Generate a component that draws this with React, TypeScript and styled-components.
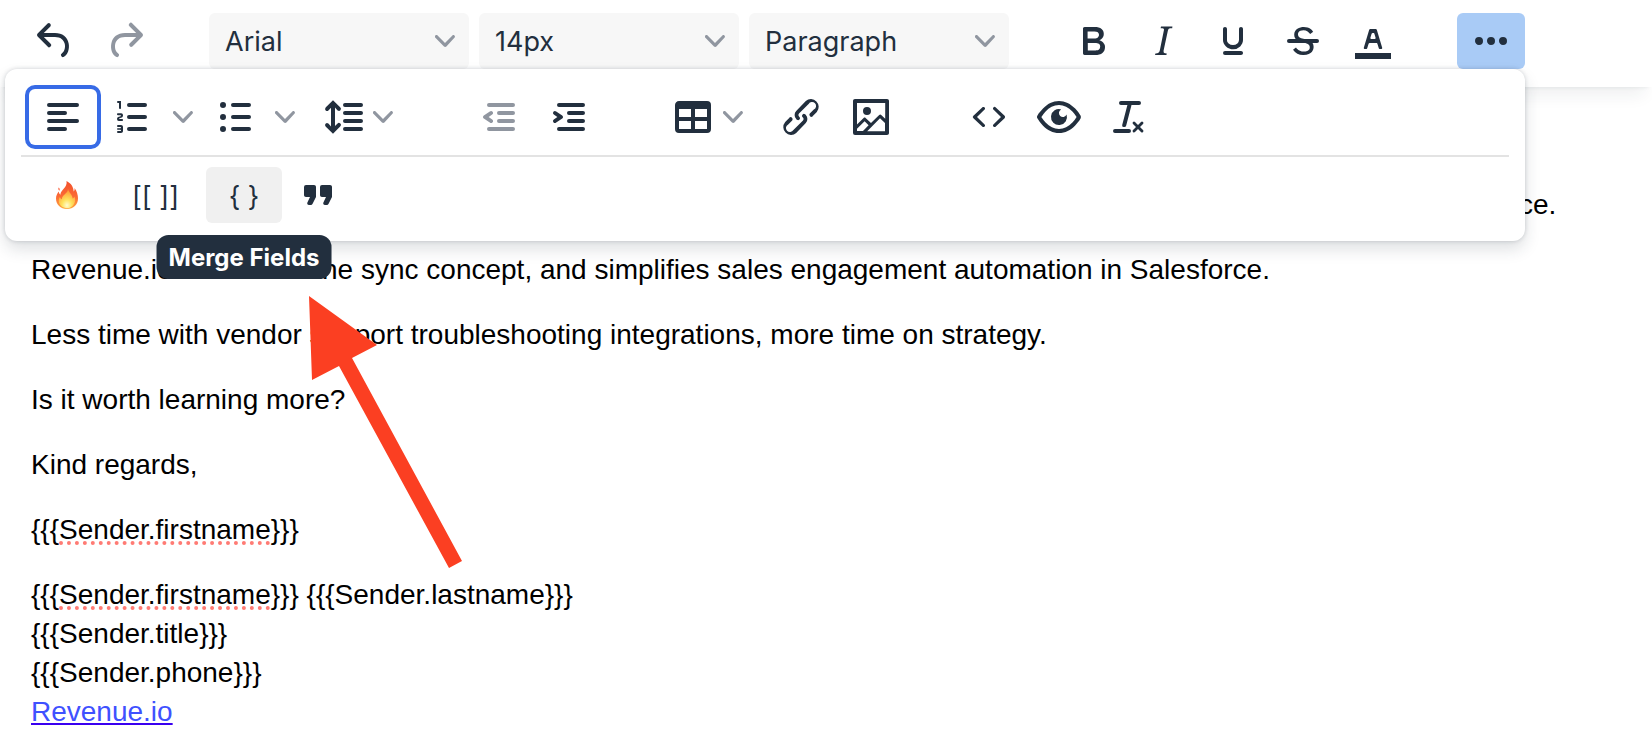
import React from "react";
import styled, { createGlobalStyle, css } from "styled-components";

const INK = "#222f3e";
const MUTED = "#9096a0";
const UI_FONT = `Inter, "Liberation Sans", sans-serif`;

const GlobalStyle = createGlobalStyle`
  *, *::before, *::after { box-sizing: border-box; }
  body { margin: 0; background: #fff; overflow-x: hidden; }
`;

const Editor = styled.div`
  position: relative;
  min-height: 100vh;
  background: #fff;
`;

const Header = styled.header`
  position: relative;
  z-index: 1;
  padding: 13px 21px 18px;
  background: #fff;
  box-shadow: 0 4px 4px -4px rgba(34, 47, 62, 0.1), 0 16px 16px -8px rgba(34, 47, 62, 0.07);
`;

const Toolbar = styled.div`
  position: relative;
  display: flex;
  width: fit-content;
  gap: 50px;
`;

const Group = styled.div<{ $gap?: number }>`
  display: flex;
  gap: ${(p) => p.$gap ?? 2}px;
`;

const ToolButton = styled.button<{ $active?: boolean; $focused?: boolean }>`
  display: flex;
  align-items: center;
  justify-content: center;
  width: 68px;
  height: 56px;
  padding: 0;
  border: 0;
  border-radius: 6px;
  background: ${(p) => (p.$active ? "#a9cbf6" : "transparent")};
  color: ${INK};
  cursor: pointer;

  &:disabled {
    color: ${MUTED};
    cursor: default;
  }

  ${(p) =>
    p.$focused &&
    css`
      box-shadow: 0 0 0 4px #376be6;
    `}
`;

const EmojiButton = styled(ToolButton)`
  width: 76px;
`;

const TextButton = styled(ToolButton)<{ $hovered?: boolean; $wide?: boolean }>`
  width: ${(p) => (p.$wide ? 97 : 76)}px;
  padding-top: 3px;
  background: ${(p) => (p.$hovered ? "#f0f0f0" : "transparent")};
  font-family: ${UI_FONT};
  font-size: 27px;
  line-height: 32px;
  white-space: nowrap;
`;

const MenuButton = styled(ToolButton)`
  justify-content: flex-start;
  width: 112px;
  padding-left: 16px;
  gap: 6px;
`;

const Split = styled.div`
  display: flex;
`;

const SplitChevron = styled(ToolButton)`
  width: 32px;
`;

const Field = styled.label`
  display: grid;
  grid-template-columns: 1fr 34px;
  align-items: center;
  width: 260px;
  height: 56px;
  border-radius: 6px;
  background: #f7f7f7;
`;

const Select = styled.select`
  grid-area: 1 / 1 / 2 / 3;
  height: 56px;
  padding: 0 40px 0 16px;
  border: 0;
  border-radius: 6px;
  appearance: none;
  background: transparent;
  color: ${INK};
  font-family: ${UI_FONT};
  font-size: 27px;
`;

const FieldChevron = styled.span`
  grid-area: 1 / 2 / 2 / 3;
  display: flex;
  pointer-events: none;
`;

const Drawer = styled.div`
  position: absolute;
  top: 56px;
  left: -16px;
  right: 0;
  padding: 10px 16px 8px;
  border-radius: 12px;
  background: #fff;
  box-shadow: 0 0 4px rgba(34, 47, 62, 0.2), 0 8px 16px rgba(34, 47, 62, 0.15);
`;

const DrawerRow = styled.div`
  display: flex;
  gap: 50px;
  padding: 10px 8px;

  & + & {
    border-top: 2px solid #e3e3e3;
  }
`;

const TooltipAnchor = styled.div`
  position: relative;
  display: flex;
`;

const Tooltip = styled.div`
  position: absolute;
  top: 68px;
  left: 50%;
  transform: translateX(-50%);
  padding: 7px 12px 5px;
  border-radius: 12px;
  background: ${INK};
  color: #fff;
  font-family: ${UI_FONT};
  font-size: 24px;
  font-weight: 700;
  line-height: 32px;
  white-space: nowrap;
`;

const Content = styled.main`
  padding: 98px 31px 12px;
  color: #000;
  font-family: Arial, "Liberation Sans", sans-serif;
  font-size: 28px;
  line-height: 39px;
`;

const Paragraph = styled.p`
  margin: 0 0 26px;
`;

const Misspelled = styled.span`
  text-decoration: underline dotted #ff7b74 4px;
  text-decoration-skip-ink: none;
  text-underline-offset: 2px;
`;

const Link = styled.a`
  color: #3f51ff;
  text-decoration: underline #3a00f0 2px;
  text-underline-offset: 2px;
`;

const Arrow = styled.svg`
  position: absolute;
  z-index: 2;
  top: 296px;
  left: 309px;
  pointer-events: none;
`;

const paths = {
  undo: "M6.4 8H12c3.7 0 6.2 2 6.8 5.1.6 2.7-.4 5.6-2.3 6.8a1 1 0 0 1-1-1.8c1.1-.6 1.8-2.7 1.4-4.6-.5-2.1-2.1-3.5-4.9-3.5H6.4l3.3 3.3a1 1 0 1 1-1.4 1.4l-5-5a1 1 0 0 1 0-1.4l5-5a1 1 0 0 1 1.4 1.4L6.4 8Z",
  redo: "M17.6 10H12c-2.8 0-4.4 1.4-4.9 3.5-.4 2 .3 4 1.4 4.6a1 1 0 1 1-1 1.8c-2-1.2-2.9-4.1-2.3-6.8.6-3 3-5.1 6.8-5.1h5.6l-3.3-3.3a1 1 0 1 1 1.4-1.4l5 5a1 1 0 0 1 0 1.4l-5 5a1 1 0 0 1-1.4-1.4l3.3-3.3Z",
  bold: "M7.8 19c-.3 0-.5 0-.6-.2l-.2-.5V5.7c0-.2 0-.4.2-.5l.6-.2h5c1.5 0 2.7.3 3.5 1 .7.6 1.1 1.4 1.1 2.5a3 3 0 0 1-.6 1.9c-.4.6-1 1-1.6 1.2.4.1.9.3 1.3.6s.8.7 1 1.2c.4.4.5 1 .5 1.6 0 1.3-.4 2.3-1.3 3-.8.7-2.1 1-3.8 1H7.8Zm5-8.3c.6 0 1.2-.1 1.6-.5.4-.3.6-.7.6-1.3 0-1.1-.8-1.7-2.3-1.7H9.3v3.5h3.4Zm.5 6c.7 0 1.3-.1 1.7-.4.4-.4.6-.9.6-1.5s-.2-1-.7-1.4c-.4-.3-1-.4-2-.4H9.4v3.8h4Z",
  italic:
    "m16.7 4.7-.1.9h-.3c-.6 0-1 0-1.4.3-.3.3-.4.6-.5 1.1l-2.1 9.8v.6c0 .5.4.8 1.4.8h.2l-.2.8H8l.2-.8h.2c1.1 0 1.8-.5 2-1.5l2-9.8.1-.5c0-.6-.4-.8-1.4-.8h-.3l.2-.9h5.8Z",
  underline:
    "M16 5c.6 0 1 .4 1 1v5.5a4 4 0 0 1-.4 1.8l-1 1.4a5.3 5.3 0 0 1-5.5 1 5 5 0 0 1-1.6-1c-.5-.4-.8-.9-1.1-1.4a4 4 0 0 1-.4-1.8V6c0-.6.4-1 1-1s1 .4 1 1v5.5c0 .3 0 .6.2 1l.6.7a3.3 3.3 0 0 0 2.2.8 3.4 3.4 0 0 0 2.2-.8c.3-.2.4-.5.6-.8l.2-.9V6c0-.6.4-1 1-1ZM8 17h8c.6 0 1 .4 1 1s-.4 1-1 1H8a1 1 0 0 1 0-2Z",
  strikeS:
    "M15.6 8.5c-.5-.7-1-1.1-1.3-1.3-.6-.4-1.3-.6-2-.6-2.7 0-2.8 1.7-2.8 2.1 0 1.6 1.8 2 3.2 2.3 4.4.9 4.6 2.8 4.6 3.9 0 1.4-.7 4.1-5 4.1A6.2 6.2 0 0 1 7 16.4l1.5-1.1c.4.6 1.6 2 3.7 2 1.6 0 2.5-.4 3-1.2.4-.8.3-2-.8-2.6-.7-.4-1.6-.7-2.9-1-1-.2-3.9-.8-3.9-3.6C7.6 6 10.3 5 12.4 5c2.9 0 4.2 1.6 4.7 2.4l-1.5 1.1Z",
  strikeBar: "M5 11h14a1 1 0 0 1 0 2H5a1 1 0 0 1 0-2Z",
  textColor:
    "M3 18h18v3H3zM8.7 16h-.8a.5.5 0 0 1-.5-.6l2.7-9c.1-.3.3-.4.5-.4h2.8c.2 0 .4.1.5.4l2.7 9a.5.5 0 0 1-.5.6h-.8a.5.5 0 0 1-.4-.4l-.7-2.2c0-.3-.3-.4-.5-.4h-3.4c-.2 0-.4.1-.5.4l-.7 2.2c0 .3-.2.4-.4.4Zm2.6-7.6-.6 2a.5.5 0 0 0 .5.6h1.6a.5.5 0 0 0 .5-.6l-.6-2c0-.3-.3-.4-.5-.4h-.4c-.2 0-.4.1-.5.4Z",
  more: "M6 10a2 2 0 0 0-2 2c0 1.1.9 2 2 2a2 2 0 0 0 2-2 2 2 0 0 0-2-2Zm12 0a2 2 0 0 0-2 2c0 1.1.9 2 2 2a2 2 0 0 0 2-2 2 2 0 0 0-2-2Zm-6 0a2 2 0 0 0-2 2c0 1.1.9 2 2 2a2 2 0 0 0 2-2 2 2 0 0 0-2-2Z",
  alignLeft:
    "M5 5h14a1 1 0 0 1 0 2H5a1 1 0 1 1 0-2Zm0 4h8a1 1 0 0 1 0 2H5a1 1 0 1 1 0-2Zm0 8h8a1 1 0 0 1 0 2H5a1 1 0 0 1 0-2Zm0-4h14a1 1 0 0 1 0 2H5a1 1 0 0 1 0-2Z",
  orderedList:
    "M10 17h8a1 1 0 0 1 0 2h-8a1 1 0 0 1 0-2Zm0-6h8a1 1 0 0 1 0 2h-8a1 1 0 0 1 0-2Zm0-6h8a1 1 0 0 1 0 2h-8a1 1 0 1 1 0-2ZM6 4v3.5c0 .3-.2.5-.5.5a.5.5 0 0 1-.5-.5V5h-.5a.5.5 0 0 1 0-1H6Zm-1 8.8.2.2h1.3c.3 0 .5.2.5.5s-.2.5-.5.5H4.9a1 1 0 0 1-.9-1V13c0-.4.3-.8.6-1l1.2-.4.2-.3a.2.2 0 0 0-.2-.2H4.5a.5.5 0 0 1-.5-.5c0-.3.2-.5.5-.5h1.6c.5 0 .9.4.9 1v.1c0 .4-.3.8-.6 1l-1.2.4-.2.3ZM7 17v2c0 .6-.4 1-1 1H4.5a.5.5 0 0 1 0-1h1.2c.2 0 .3-.1.3-.3 0-.2-.1-.3-.3-.3H4.4a.4.4 0 1 1 0-.8h1.3c.2 0 .3-.1.3-.3 0-.2-.1-.3-.3-.3H4.5a.5.5 0 1 1 0-1H6c.6 0 1 .4 1 1Z",
  bulletList:
    "M11 5h8a1 1 0 0 1 0 2h-8a1 1 0 0 1 0-2Zm0 6h8a1 1 0 0 1 0 2h-8a1 1 0 0 1 0-2Zm0 6h8a1 1 0 0 1 0 2h-8a1 1 0 0 1 0-2ZM4.5 6a1.5 1.5 0 1 1 3 0 1.5 1.5 0 0 1-3 0Zm0 6a1.5 1.5 0 1 1 3 0 1.5 1.5 0 0 1-3 0Zm0 6a1.5 1.5 0 1 1 3 0 1.5 1.5 0 0 1-3 0Z",
  lineHeight:
    "M21 5a1 1 0 0 1 0 2h-8a1 1 0 0 1 0-2h8Zm0 4a1 1 0 0 1 0 2h-8a1 1 0 0 1 0-2h8Zm0 4a1 1 0 0 1 0 2h-8a1 1 0 0 1 0-2h8Zm0 4a1 1 0 0 1 0 2h-8a1 1 0 0 1 0-2h8ZM7 3.6l3.7 3.7a1 1 0 0 1-1.3 1.5h-.1L8 7.3v9.2l1.3-1.3a1 1 0 0 1 1.3 0h.1c.4.4.4 1 0 1.3v.1L7 20.4l-3.7-3.7a1 1 0 0 1 1.3-1.5h.1L6 16.7V7.4L4.7 8.7a1 1 0 0 1-1.3 0h-.1a1 1 0 0 1 0-1.3v-.1L7 3.6Z",
  outdent:
    "M7 5h12a1 1 0 0 1 0 2H7a1 1 0 1 1 0-2Zm5 4h7a1 1 0 0 1 0 2h-7a1 1 0 0 1 0-2Zm0 4h7a1 1 0 0 1 0 2h-7a1 1 0 0 1 0-2Zm-5 4h12a1 1 0 0 1 0 2H7a1 1 0 0 1 0-2Zm1.6-3.8a1 1 0 0 1-1.2 1.6l-3-2a1 1 0 0 1 0-1.6l3-2a1 1 0 0 1 1.2 1.6L6.8 12l1.8 1.2Z",
  indent:
    "M7 5h12a1 1 0 0 1 0 2H7a1 1 0 1 1 0-2Zm5 4h7a1 1 0 0 1 0 2h-7a1 1 0 0 1 0-2Zm0 4h7a1 1 0 0 1 0 2h-7a1 1 0 0 1 0-2Zm-5 4h12a1 1 0 0 1 0 2H7a1 1 0 0 1 0-2Zm-2.6-3.8L6.2 12l-1.8-1.2a1 1 0 0 1 1.2-1.6l3 2a1 1 0 0 1 0 1.6l-3 2a1 1 0 1 1-1.2-1.6Z",
  table:
    "M19 4a2 2 0 0 1 2 2v12a2 2 0 0 1-2 2H5a2 2 0 0 1-2-2V6c0-1.1.9-2 2-2h14ZM5 14v4h6v-4H5Zm14 0h-6v4h6v-4Zm0-6h-6v4h6V8ZM5 12h6V8H5v4Z",
  link: "M6.2 12.3a1 1 0 0 1 1.4 1.4l-2 2a2 2 0 1 0 2.6 2.8l4.8-4.8a1 1 0 0 0 0-1.4 1 1 0 1 1 1.4-1.3 2.9 2.9 0 0 1 0 4L9.6 20a3.9 3.9 0 0 1-5.5-5.5l2-2Zm11.6-.6a1 1 0 0 1-1.4-1.4l2-2a2 2 0 1 0-2.6-2.8L11 10.3a1 1 0 0 0 0 1.4A1 1 0 1 1 9.6 13a2.9 2.9 0 0 1 0-4L14.4 4a3.9 3.9 0 0 1 5.5 5.5l-2 2Z",
  image:
    "m5 15.7 3.3-3.2c.3-.3.7-.3 1 0L12 15l4.1-4c.3-.4.8-.4 1 0l2 1.9V5H5v10.7ZM5 18V19h3l2.8-2.9-2-2L5 17.9Zm14-3-2.5-2.4-6.4 6.5H19v-4ZM4 3h16c.6 0 1 .4 1 1v16c0 .6-.4 1-1 1H4a1 1 0 0 1-1-1V4c0-.6.4-1 1-1Zm6 8a2 2 0 1 0 0-4 2 2 0 0 0 0 4Z",
  code: "M9.8 15.7c.3.3.3.8 0 1-.3.4-.9.4-1.2 0l-4.4-4.1a.8.8 0 0 1 0-1.2l4.4-4.2c.3-.3.9-.3 1.2 0 .3.3.3.8 0 1.1L6 12l3.8 3.7ZM14.2 15.7c-.3.3-.3.8 0 1 .4.4.9.4 1.2 0l4.4-4.1c.3-.3.3-.9 0-1.2l-4.4-4.2a.8.8 0 0 0-1.2 0c-.3.3-.3.8 0 1.1L18 12l-3.8 3.7Z",
  preview:
    "M3.5 12.5c.5.8 1.1 1.6 1.8 2.3 2 2 4.2 3.2 6.7 3.2s4.7-1.2 6.7-3.2a16.2 16.2 0 0 0 2.1-2.8 15.7 15.7 0 0 0-2.1-2.8c-2-2-4.2-3.2-6.7-3.2a9.3 9.3 0 0 0-6.7 3.2A16.2 16.2 0 0 0 3.2 12c0 .2.2.3.3.5Zm-2.4-1 .7-1.2L4 7.8C6.2 5.4 8.9 4 12 4c3 0 5.8 1.4 8.1 3.8a18.2 18.2 0 0 1 2.8 3.7v1l-.7 1.2-2.1 2.5c-2.3 2.4-5 3.8-8.1 3.8-3 0-5.8-1.4-8.1-3.8a18.2 18.2 0 0 1-2.8-3.7 1 1 0 0 1 0-1Zm12-3.3a2 2 0 1 0 2.7 2.6 4 4 0 1 1-2.6-2.6Z",
  clear:
    "M13.2 6a1 1 0 0 1 0 .2l-2.6 10a1 1 0 0 1-1 .8h-.2a.8.8 0 0 1-.8-1l2.6-10H8a1 1 0 1 1 0-2h9a1 1 0 0 1 0 2h-3.8ZM5 18h7a1 1 0 0 1 0 2H5a1 1 0 0 1 0-2Zm13 1.5L16.5 18 15 19.5a.7.7 0 0 1-1-1l1.5-1.5-1.5-1.5a.7.7 0 0 1 1-1l1.5 1.5 1.5-1.5a.7.7 0 0 1 1 1L17.5 17l1.5 1.5a.7.7 0 0 1-1 1Z",
  quote:
    "M7.5 17h.9c.4 0 .7-.2.9-.6L11 13V8c0-.6-.4-1-1-1H6a1 1 0 0 0-1 1v4c0 .6.4 1 1 1h2l-1.3 2.7a1 1 0 0 0 .8 1.3Zm8 0h.9c.4 0 .7-.2.9-.6L19 13V8c0-.6-.4-1-1-1h-4a1 1 0 0 0-1 1v4c0 .6.4 1 1 1h2l-1.3 2.7a1 1 0 0 0 .8 1.3Z",
};

type IconName = Exclude<keyof typeof paths, "strikeS" | "strikeBar"> | "strike";

const Icon = ({ name }: { name: IconName }) => (
  <svg width="48" height="48" viewBox="0 0 24 24" fill="currentColor" aria-hidden="true">
    {name === "strike" ? (
      <>
        <path d={paths.strikeS} />
        <path d={paths.strikeBar} />
      </>
    ) : (
      <path fillRule="evenodd" d={paths[name]} />
    )}
  </svg>
);

const Chevron = () => (
  <svg width="20" height="20" viewBox="0 0 10 10" fill={MUTED} aria-hidden="true">
    <path d="M8.7 2.2c.3-.3.8-.3 1 0 .4.4.4.9 0 1.2L5.7 7.8c-.3.3-.9.3-1.2 0L.2 3.4a.8.8 0 0 1 0-1.2c.3-.3.8-.3 1.1 0L5 6l3.7-3.8Z" />
  </svg>
);

const Flame = () => (
  <svg width="24" height="30" viewBox="0 0 24 30" aria-hidden="true">
    <defs>
      <linearGradient id="flame-outer" x1="0" y1="0" x2="0" y2="1">
        <stop offset="0" stopColor="#f2502c" />
        <stop offset="0.55" stopColor="#fb6a35" />
        <stop offset="1" stopColor="#ffa63c" />
      </linearGradient>
      <radialGradient id="flame-inner" cx="0.5" cy="0.85" r="0.75">
        <stop offset="0" stopColor="#fffbd0" />
        <stop offset="0.4" stopColor="#ffe25c" />
        <stop offset="1" stopColor="#ff9c38" />
      </radialGradient>
    </defs>
    <path
      fill="url(#flame-outer)"
      d="M11.5 1c4.5 2.2 7 5.8 7.2 10.5.8-.8 1.1-2 .8-3.5 2.3 3 3.5 6.600 3.500 10.500 0 6-4.600 10.500-11 10.500S1 24.500 1 18.500c0-3 1.200-5 2.800-7 .2 1.500.6 2.500 1.600 3.200C5.400 10 12.800 7.500 11.500 1Z"
    />
    <path fill="#fb6a4a" d="M3.6 7.6c1.3.9 1.5 2 .9 3.200-1.300-.8-1.600-1.900-.9-3.200Z" />
    <path
      fill="url(#flame-inner)"
      d="M13 9c1 4 4.500 5.500 4.600 9.500.9-.4 1.400-1 1.700-2 1.200 2.200 1.200 4.800 0 7-1.400 3-4.100 4.700-7.400 4.700s-6.300-1.800-7.600-4.700c-.9-2.200-.7-4.500.6-6.500.4 1.200 1 1.900 2 2.300C6.700 15 13 13.500 13 9Z"
    />
  </svg>
);

const Tool = ({
  icon,
  label,
  ...rest
}: {
  icon: IconName;
  label: string;
  disabled?: boolean;
  $active?: boolean;
  $focused?: boolean;
}) => (
  <ToolButton type="button" aria-label={label} {...rest}>
    <Icon name={icon} />
  </ToolButton>
);

const SplitTool = ({ icon, label }: { icon: IconName; label: string }) => (
  <Split>
    <Tool icon={icon} label={label} />
    <SplitChevron type="button" aria-label={`${label} options`}>
      <Chevron />
    </SplitChevron>
  </Split>
);

const MenuTool = ({ icon, label }: { icon: IconName; label: string }) => (
  <MenuButton type="button" aria-label={label} aria-haspopup="menu">
    <Icon name={icon} />
    <Chevron />
  </MenuButton>
);

const Dropdown = ({ label, options }: { label: string; options: string[] }) => (
  <Field>
    <Select aria-label={label} defaultValue={options[0]}>
      {options.map((option) => (
        <option key={option}>{option}</option>
      ))}
    </Select>
    <FieldChevron>
      <Chevron />
    </FieldChevron>
  </Field>
);

export default function App() {
  return (
    <Editor>
      <GlobalStyle />
      <Header>
        <Toolbar role="toolbar" aria-label="Formatting">
          <Group>
            <Tool icon="undo" label="Undo" />
            <Tool icon="redo" label="Redo" disabled />
          </Group>
          <Group $gap={10}>
            <Dropdown label="Font" options={["Arial"]} />
            <Dropdown label="Font size" options={["14px"]} />
            <Dropdown label="Block format" options={["Paragraph"]} />
          </Group>
          <Group>
            <Tool icon="bold" label="Bold" />
            <Tool icon="italic" label="Italic" />
            <Tool icon="underline" label="Underline" />
            <Tool icon="strike" label="Strikethrough" />
            <Tool icon="textColor" label="Text color" />
          </Group>
          <Group>
            <Tool icon="more" label="More" $active />
          </Group>

          <Drawer>
            <DrawerRow>
              <Group>
                <Tool icon="alignLeft" label="Align left" $focused />
                <SplitTool icon="orderedList" label="Numbered list" />
                <SplitTool icon="bulletList" label="Bullet list" />
                <MenuTool icon="lineHeight" label="Line height" />
              </Group>
              <Group>
                <Tool icon="outdent" label="Decrease indent" disabled />
                <Tool icon="indent" label="Increase indent" />
              </Group>
              <Group>
                <MenuTool icon="table" label="Table" />
                <Tool icon="link" label="Insert link" />
                <Tool icon="image" label="Insert image" />
              </Group>
              <Group>
                <Tool icon="code" label="Source code" />
                <Tool icon="preview" label="Preview" />
                <Tool icon="clear" label="Clear formatting" />
              </Group>
            </DrawerRow>
            <DrawerRow>
              <Group>
                <EmojiButton type="button" aria-label="Hot">
                  <Flame />
                </EmojiButton>
                <TextButton type="button" $wide>
                  [[ ]]
                </TextButton>
                <TooltipAnchor>
                  <TextButton type="button" $hovered aria-describedby="merge-tip">
                    {"{ }"}
                  </TextButton>
                  <Tooltip role="tooltip" id="merge-tip">
                    Merge Fields
                  </Tooltip>
                </TooltipAnchor>
                <Tool icon="quote" label="Blockquote" />
              </Group>
            </DrawerRow>
          </Drawer>
        </Toolbar>
      </Header>

      <Content>
        <Paragraph>
          Other platforms still rely on a complicated data sync concept, and complicates sales
          engagement automation in Salesforce.
        </Paragraph>
        <Paragraph>
          Revenue.io eliminates the sync concept, and simplifies sales engagement automation in
          Salesforce.
        </Paragraph>
        <Paragraph>
          Less time with vendor support troubleshooting integrations, more time on strategy.
        </Paragraph>
        <Paragraph>Is it worth learning more?</Paragraph>
        <Paragraph>Kind regards,</Paragraph>
        <Paragraph>
          {"{{{"}
          <Misspelled>Sender.firstname</Misspelled>
          {"}}}"}
        </Paragraph>
        <Paragraph>
          {"{{{"}
          <Misspelled>Sender.firstname</Misspelled>
          {"}}} {{{Sender.lastname}}}"}
          <br />
          {"{{{Sender.title}}}"}
          <br />
          {"{{{Sender.phone}}}"}
          <br />
          <Link href="#revenue">Revenue.io</Link>
        </Paragraph>
      </Content>

      <Arrow width="154" height="273" viewBox="0 0 154 273" aria-hidden="true">
        <path fill="#fb3f22" d="M0 0 68 49 43 62 153 265 140 272 30 70 3 84Z" />
      </Arrow>
    </Editor>
  );
}
